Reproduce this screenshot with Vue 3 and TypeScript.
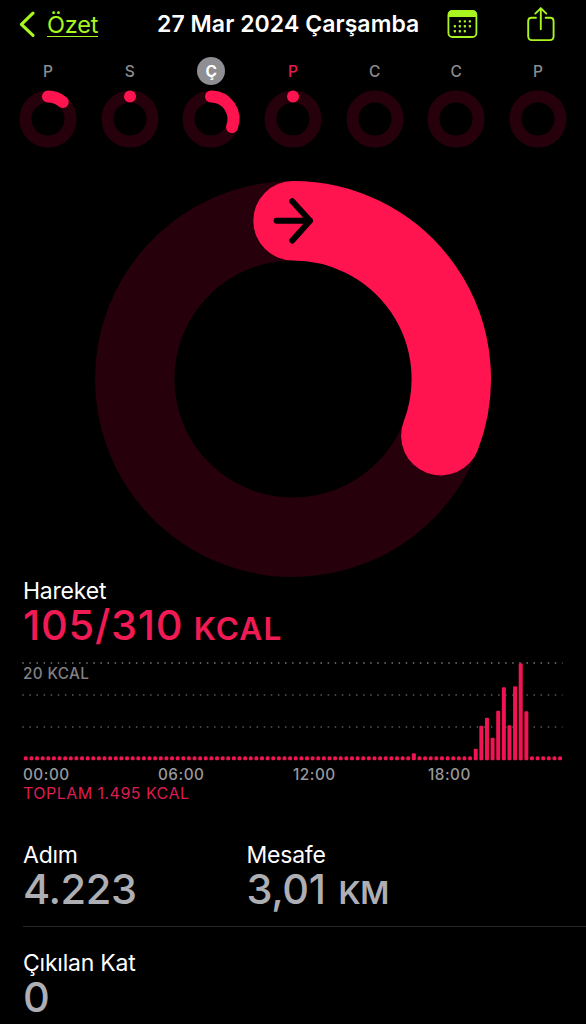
<script setup lang="ts">
interface Day {
  label: string
  sweep: number
  state?: 'selected' | 'today'
}

const days: Day[] = [
  { label: 'P', sweep: 41 },
  { label: 'S', sweep: 0.1 },
  { label: 'Ç', sweep: 111, state: 'selected' },
  { label: 'P', sweep: 0.1, state: 'today' },
  { label: 'C', sweep: 0 },
  { label: 'C', sweep: 0 },
  { label: 'P', sweep: 0 },
]

function arc(c: number, r: number, degrees: number): string {
  const a = (degrees * Math.PI) / 180
  const x = c + r * Math.sin(a)
  const y = c - r * Math.cos(a)
  return `M${c} ${c - r}A${r} ${r} 0 ${degrees > 180 ? 1 : 0} 1 ${x.toFixed(3)} ${y.toFixed(3)}`
}

// Quarter-hour slots with activity; every other slot shows a baseline dot.
const active: Record<number, number> = {
  69: 7, 80: 11.5, 81: 34.5, 82: 42.5, 83: 22.5, 84: 49.5,
  85: 73, 86: 35, 87: 74, 88: 97, 89: 49,
}
const bars = Array.from({ length: 96 }, (_, i) => ({
  x: 0.8 + i * 5.624,
  h: active[i] ?? 4,
}))
const gridLines = [
  { y: 3, color: '#77777b' },
  { y: 35, color: '#5a5a5e' },
  { y: 67, color: '#5a5a5e' },
]
const hours = ['00:00', '06:00', '12:00', '18:00']
const calendarDots = [
  [13.3, 12.3], [18.3, 12.3], [23.3, 12.3],
  [8.3, 17.2], [13.3, 17.2], [18.3, 17.2], [23.3, 17.2],
  [8.3, 22.2], [13.3, 22.2], [18.3, 22.2],
]
</script>

<template>
  <main class="screen">
    <header class="bar">
      <a class="back">
        <svg width="18" height="30" viewBox="0 0 18 30">
          <path d="M15 4.2 3.4 15.3 15 26.4" fill="none" stroke="#a8f51f" stroke-width="3.2" stroke-linecap="round" stroke-linejoin="round" />
        </svg>
        <span class="back-label">Özet</span>
      </a>
      <h1 class="title">27 Mar 2024 Çarşamba</h1>
      <svg class="calendar" width="32" height="30" viewBox="0.5 0 32 30">
        <rect x="1.9" y="2" width="28" height="26" rx="4" fill="none" stroke="#a8f51f" stroke-width="1.8" />
        <path d="M1.5 8V5.5Q1.5 1.5 5.5 1.5H26.3Q30.3 1.5 30.3 5.5V8Z" fill="#a8f51f" />
        <rect v-for="(d, i) in calendarDots" :key="i" :x="d[0] - 1.1" :y="d[1] - 1.1" width="2.3" height="2.3" rx=".7" fill="#a8f51f" />
      </svg>
      <svg class="share" width="30" height="38" viewBox="0 0.7 30 38">
        <g fill="none" stroke="#a8f51f" stroke-width="1.9" stroke-linecap="round" stroke-linejoin="round">
          <path d="M10 13.5H5.6Q2.2 13.5 2.2 16.9V32Q2.2 35.8 6 35.8H23.8Q27.6 35.8 27.6 32V16.9Q27.6 13.5 24.2 13.5H19.6" />
          <path d="M14.8 25V4M9.3 9.3 14.8 3.8 20.3 9.3" />
        </g>
      </svg>
    </header>

    <nav class="week">
      <div v-for="(day, i) in days" :key="i" class="day">
        <span class="day-label" :class="day.state">{{ day.label }}</span>
        <svg width="58" height="58" viewBox="0 0 58 58" fill="none" stroke-width="12">
          <circle cx="29" cy="29" r="22.5" stroke="#26000b" />
          <path v-if="day.sweep" :d="arc(29, 22.5, day.sweep)" stroke="#ff1450" stroke-linecap="round" />
        </svg>
      </div>
    </nav>

    <section class="ring">
      <svg width="396" height="396" viewBox="0 0 396 396" fill="none">
        <circle cx="198" cy="198" r="158.3" stroke="#26000b" stroke-width="79.4" />
        <path :d="arc(198, 158.3, 111)" stroke="#ff1450" stroke-width="79.4" stroke-linecap="round" />
        <path d="M181.6 39.7H215M197.3 20.3 215 39.7 197.3 59.5" stroke="#000" stroke-width="6" stroke-linecap="round" stroke-linejoin="round" />
      </svg>
    </section>

    <section class="move">
      <h2 class="name">Hareket</h2>
      <p class="value pink"><span>105/310</span><span class="unit">KCAL</span></p>
      <div class="chart">
        <span class="scale">20 KCAL</span>
        <svg width="542" height="101" viewBox="0 0 542 101">
          <line v-for="g in gridLines" :key="g.y" x1="-0.7" :y1="g.y" x2="539.5" :y2="g.y" :stroke="g.color" stroke-width="1.4" stroke-dasharray="1.5 5.6" />
          <rect v-for="(b, i) in bars" :key="i" :x="b.x" :y="100.3 - b.h" width="4" :height="b.h" :rx="b.h > 4 ? 1.2 : 1.6" fill="#f01552" />
        </svg>
      </div>
      <div class="hours">
        <span v-for="h in hours" :key="h">{{ h }}</span>
      </div>
      <p class="total">TOPLAM 1.495 KCAL</p>
    </section>

    <section class="stats">
      <div class="stat">
        <h2 class="name">Adım</h2>
        <p class="value">4.223</p>
      </div>
      <div class="stat">
        <h2 class="name">Mesafe</h2>
        <p class="value"><span>3,01</span><span class="unit">KM</span></p>
      </div>
    </section>
    <section class="stats last">
      <div class="stat">
        <h2 class="name">Çıkılan Kat</h2>
        <p class="value">0</p>
      </div>
    </section>
  </main>
</template>

<style>
body {
  margin: 0;
  background: #000;
}
</style>

<style scoped>
.screen {
  width: 586px;
  height: 1024px;
  overflow: hidden;
  background: #000;
  color: #fff;
  font-family: Inter, "Liberation Sans", sans-serif;
}
h1, h2, p {
  margin: 0;
  font-weight: 400;
  white-space: nowrap;
}
svg {
  display: block;
  flex: none;
  overflow: visible;
}
.bar {
  display: flex;
  align-items: center;
  height: 48px;
}
.back {
  display: flex;
  align-items: center;
  width: 139px;
  padding-left: 18px;
  color: #a8f51f;
}
.back-label {
  margin-left: 11px;
  padding-top: 1px;
  border-bottom: 1.5px solid #a8f51f;
  font-size: 23.5px;
  line-height: 23px;
  letter-spacing: -0.2px;
}
.title {
  width: 290px;
  font-size: 23px;
  font-weight: 600;
  line-height: 48px;
  letter-spacing: 0.07px;
}
.share {
  margin-left: 46.6px;
}
.week {
  display: grid;
  grid-template-columns: repeat(7, 81.65px);
  height: 133px;
  padding-left: 7.2px;
}
.day {
  display: flex;
  flex-direction: column;
  align-items: center;
  padding-top: 8.6px;
}
.day-label {
  width: 28.4px;
  height: 28.4px;
  margin-bottom: 5px;
  border-radius: 50%;
  color: #8c8c90;
  font-size: 15.5px;
  line-height: 30px;
  text-align: center;
  font-weight: 500;
}
.selected {
  background: #8e8e93;
  color: #fff;
  font-weight: 700;
}
.today {
  color: #e51b50;
}
.ring {
  height: 396px;
  padding-left: 95.3px;
}
.move {
  padding: 2px 0 0 23px;
}
.name {
  font-size: 23px;
  line-height: 24px;
  letter-spacing: -0.22px;
}
.value {
  display: flex;
  align-items: baseline;
  height: 44px;
  color: #aeaeb5;
  font-size: 41.5px;
  font-weight: 500;
  line-height: 44px;
  letter-spacing: -0.4px;
}
.pink {
  color: #f01a54;
  letter-spacing: 0.75px;
}
.unit {
  margin-left: 13px;
  font-size: 31.5px;
  font-weight: 600;
}
.pink .unit {
  margin-left: 10.5px;
  letter-spacing: 1.1px;
}
.chart {
  position: relative;
  margin-top: 13px;
  height: 101px;
}
.scale {
  position: absolute;
  top: 4px;
  left: 0;
  color: #808084;
  font-size: 15.3px;
  font-weight: 500;
  line-height: 19px;
  letter-spacing: 0.35px;
}
.hours {
  display: grid;
  grid-template-columns: repeat(4, 135px);
  margin-top: 4px;
  color: #98989c;
  font-size: 15.3px;
  font-weight: 500;
  line-height: 19px;
  letter-spacing: 0.5px;
}
.total {
  color: #dc1c53;
  font-size: 16px;
  line-height: 19px;
  letter-spacing: 0.46px;
}
.stats {
  display: grid;
  grid-template-columns: 223.5px 1fr;
  margin-left: 23px;
  height: 83px;
  padding-top: 40px;
  border-bottom: 1px solid #262628;
}
.last {
  border: 0;
  padding-top: 24px;
}
</style>
